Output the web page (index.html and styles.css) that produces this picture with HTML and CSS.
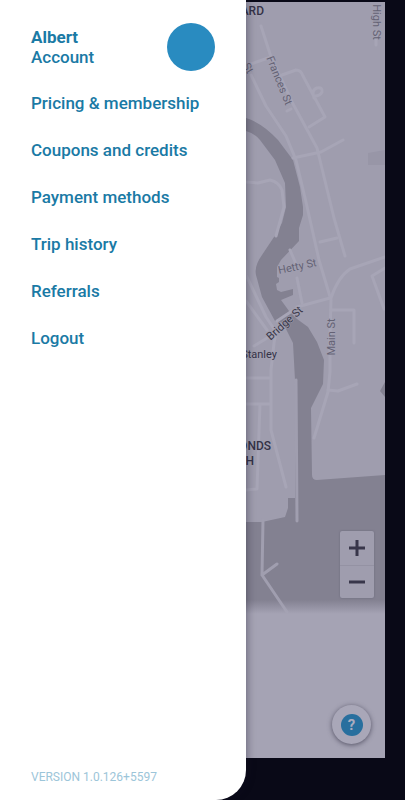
FILE: index.html
```html
<!DOCTYPE html>
<html lang="en">
<head>
<meta charset="utf-8">
<meta name="viewport" content="width=device-width, initial-scale=1">
<title>Account menu</title>
<link rel="stylesheet" href="styles.css">
</head>
<body>
<div class="app">
  <main class="map">
    <svg class="map-art" viewBox="0 2 385 756" preserveAspectRatio="xMaxYMin slice" role="img" aria-label="Map">
      <defs>
        <linearGradient id="fade" x1="0" y1="0" x2="0" y2="1">
          <stop offset="0" stop-color="#a5a3b4" stop-opacity="0"/>
          <stop offset="1" stop-color="#a5a3b4"/>
        </linearGradient>
      </defs>
      <path class="block" d="M368 153l17-3v15h-17z"/>
      <!-- river and harbour -->
      <path class="water" d="M230 115L246 118Q262 123 278 140L293 160L300 187L303 207L303 215L299 228V241L281 260L277 267V277L279 278V282L276 284L277 290L281 292L293 289V295L281 300L289 311L297 319L308 327L317 342L324 360L323 384L311 408L312 475Q312 480 317 480L385 475V620H230V522H262L285 517L288 508V498H295V380L293 343L283 323L275 321L262 297L256 275Q254 266 262 255L274 237L282 223L286 207L285 183L275 160L260 140Q254 133 246 131L230 128Z"/>
      <path class="water" d="M385 382L380 391L385 397Z"/>
      <g class="roads">
        <path d="M261 26L271 57L292 102L317 148L334 218L345 256"/>
        <path d="M271 57L251 64M251 75L266 106L286 136L296 160L306 202L319 260L331 300L330 335V372L328 392L314 438"/>
        <path d="M282 75L296 70Q301 70 303 76L325 117L309 127M314 98q-3-8 3-10q6-1 5 4q-2 4-7 4M287 111l4-2"/>
        <path d="M293 158L321 152L343 140M320 242L337 238M331 298Q338 277 350 269L385 257M297 307L330 298"/>
        <path d="M246 182L258 183L270 180Q279 182 282 190L284 207L276 236M290 250L296 264M297 278L302 303M331 310H354V343"/>
        <path d="M246 261V275L266 317L276 332L274 343L271 370V430L286 487M246 404H270M260 404L257 489L246 490M254 346L277 332M246 378H271"/>
        <path d="M385 268L372 276L384 309M328 390L338 391L357 384M376 33V45M246 301L267 330M277 321L292 311"/>
      </g>
      <g class="jetty">
        <path d="M296 380L297 521M263 520L262 575L287 612M262 575L277 564"/>
      </g>
      <rect x="230" y="600" width="155" height="14" fill="url(#fade)"/>
      <rect class="sheet" x="0" y="614" width="385" height="144"/>
      <g class="street">
        <text transform="translate(373 22) rotate(90)">High St</text>
        <text transform="translate(276 82) rotate(68)">Frances St</text>
        <text transform="translate(245 70) rotate(60)">St</text>
        <text transform="translate(298 270) rotate(-12)">Hetty St</text>
        <text class="dark" transform="translate(287 326) rotate(-42)">Bridge St</text>
        <text transform="translate(335 337) rotate(-90)">Main St</text>
      </g>
      <text class="place" x="277" y="358">Stanley</text>
      <text class="district" x="264" y="15">EDWARD</text>
      <text class="district" x="271" y="450">EDMONDS</text>
      <text class="district" x="254" y="465">BEACH</text>
    </svg>
    <div class="controls">
      <div class="zoom">
        <button type="button" aria-label="Zoom in"><svg viewBox="0 0 16 16"><path d="M8 0V16M0 8H16"/></svg></button>
        <button type="button" aria-label="Zoom out"><svg viewBox="0 0 16 16"><path d="M0 8H16"/></svg></button>
      </div>
      <button class="help" type="button" aria-label="Help"><span>?</span></button>
    </div>
  </main>
  <aside class="drawer">
    <header class="profile">
      <a href="#account"><strong>Albert</strong><br>Account</a>
      <span class="avatar"></span>
    </header>
    <nav class="menu">
      <a href="#pricing">Pricing &amp; membership</a>
      <a href="#coupons">Coupons and credits</a>
      <a href="#payment">Payment methods</a>
      <a href="#trips">Trip history</a>
      <a href="#referrals">Referrals</a>
      <a href="#logout">Logout</a>
    </nav>
    <footer class="version">VERSION 1.0.126+5597</footer>
  </aside>
</div>
</body>
</html>
```
FILE: styles.css
```css
* { box-sizing: border-box; }

body {
  margin: 0;
  background: #090917;
  font-family: Roboto, "Liberation Sans", sans-serif;
}

.app {
  display: grid;
  grid-template-columns: 17fr 11fr;
  min-height: 100vh;
}

.map {
  grid-area: 1 / 1 / 2 / 3;
  display: grid;
  margin: 2px 20px 42px 0;
  background: #9f9dae;
  overflow: hidden;
}

.map-art {
  grid-area: 1 / 1;
  width: 100%;
  height: 100%;
  min-height: 0;
}

.block { fill: #9896a7; }
.water { fill: #838191; }
.sheet { fill: #a5a3b4; }

.roads, .jetty {
  fill: none;
  stroke: #a7a5b6;
  stroke-width: 3;
  stroke-linecap: round;
  stroke-linejoin: round;
}

.jetty { stroke: #a09eaf; }

.street {
  font-size: 11px;
  fill: #646274;
  text-anchor: middle;
}

.dark { fill: #383647; }

.street text, .place, .district {
  paint-order: stroke;
  stroke: #a3a1b2;
  stroke-width: 1px;
}

.place, .district {
  fill: #343246;
  text-anchor: end;
}

.place { font-size: 11px; }

.district {
  font-size: 12px;
  font-weight: 500;
}

.controls {
  grid-area: 1 / 1;
  align-self: end;
  justify-self: end;
  display: flex;
  flex-direction: column;
  align-items: flex-end;
  gap: 107px;
  padding: 0 14px 14px 0;
}

.zoom {
  width: 34px;
  margin-right: -3px;
  background: #9f9dae;
  border-radius: 2px;
  box-shadow: 0 0 2px #686678;
}

.controls button {
  display: grid;
  place-items: center;
  padding: 0;
  border: 0;
  background: none;
  font-family: inherit;
}

.zoom button {
  width: 34px;
  height: 34px;
}

.controls .zoom button + button {
  height: 33px;
  border-top: 1px solid #9492a3;
}

.zoom svg {
  width: 16px;
  height: 16px;
  stroke: #38364a;
  stroke-width: 3;
}

.controls .help {
  width: 39px;
  height: 39px;
  border-radius: 50%;
  background: #a9a7b8;
  box-shadow: 0 1px 5px #555366;
}

.help span {
  display: grid;
  place-items: center;
  width: 22px;
  height: 22px;
  border-radius: 50%;
  background: #286f9e;
  color: #aaacc0;
  font-size: 15px;
  font-weight: 700;
}

.drawer {
  grid-area: 1 / 1;
  z-index: 1;
  display: flex;
  flex-direction: column;
  padding: 23px 31px 15px;
  background: #fff;
  border-bottom-right-radius: 30px;
  box-shadow: 1px 0 8px #11102266;
  color: #1a7aa5;
  font-size: 17px;
  font-weight: 500;
  line-height: 20px;
}

.drawer a {
  color: inherit;
  text-decoration: none;
}

.profile {
  display: flex;
  align-items: center;
  justify-content: space-between;
}

.profile strong { font-weight: 700; }

.avatar {
  width: 48px;
  height: 48px;
  border-radius: 50%;
  background: #298bc0;
}

.menu {
  display: flex;
  flex-direction: column;
  gap: 27px;
  margin-top: 22px;
  white-space: nowrap;
}

.version {
  margin-top: auto;
  color: #9cc5d9;
  font-size: 12px;
  font-weight: 400;
  line-height: 16px;
}
```
